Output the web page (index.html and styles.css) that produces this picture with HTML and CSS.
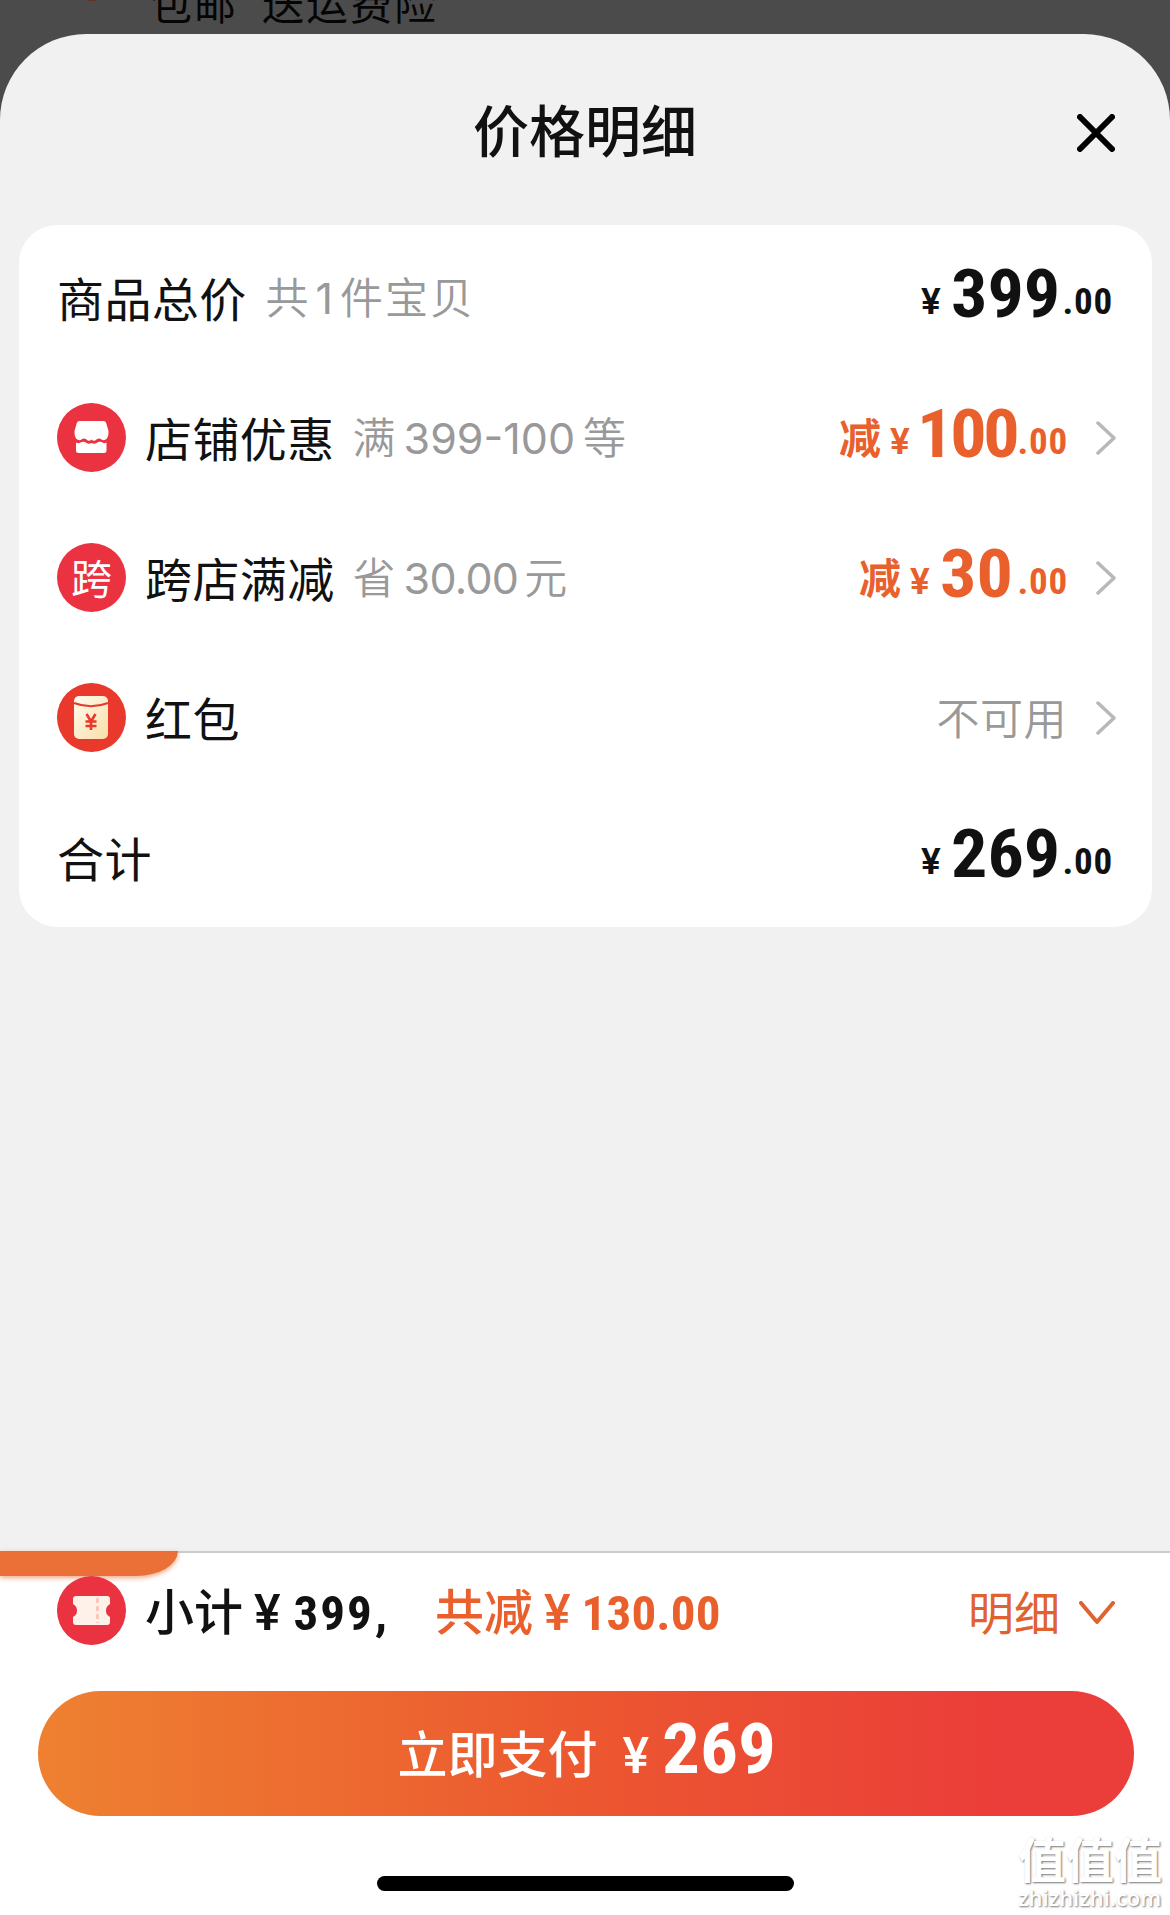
FILE: index.html
```html
<!DOCTYPE html>
<html lang="zh-CN">
<head>
    <meta charset="UTF-8">
    <meta name="viewport" content="width=device-width, initial-scale=1.0">
    <title>价格明细</title>
    <link rel="stylesheet" href="styles.css">
</head>
<body>
    <div class="page">
        <!-- 背景页面 -->
        <div class="backdrop">
            <span class="backdrop-dot"></span>
            <span class="backdrop-text">包邮</span>
            <span class="backdrop-text">送运费险</span>
        </div>

        <!-- 价格明细弹层 -->
        <div class="sheet">
            <div class="sheet-header">
                <h1 class="sheet-title">价格明细</h1>
                <svg class="close-icon" viewBox="0 0 38 38">
                    <path d="M3 3L35 35M35 3L3 35"/>
                </svg>
            </div>

            <div class="card">
                <div class="row">
                    <span class="label">商品总价</span>
                    <span class="sub count">共<span class="num">1</span>件宝贝</span>
                    <div class="price">
                        <span class="yen">¥</span><span class="big">399</span><span class="small">.00</span>
                    </div>
                </div>

                <div class="row">
                    <svg class="icon" viewBox="0 0 69 69">
                        <circle cx="34.5" cy="34.5" r="34.5" fill="#ea3241"/>
                        <path d="M22.500 18h24q2 0 2.700 2l2.300 8q.5 4-1.500 7.500-3 3-5.500 1-2.500-2-5 0-2.500 2.500-5 0-2.500 2.500-5 0-2.500-2-5 0-2.500 2-5.500-1-2-3.500-1.500-7.500l2.300-8q.7-2 2.700-2z" fill="#fff"/>
                        <path d="M19 39.500q3 1.500 5.500-.5 2.500-1 5 1 2.500 1.500 5 0 2.500 1.500 5 0 2.500-2 5-1 2.500 2 5 .5v8q0 2.500-2.500 2.500H21.500q-2.500 0-2.500-2.500z" fill="#fff"/>
                    </svg>
                    <span class="label">店铺优惠</span>
                    <span class="sub">满<span class="num">399-100</span>等</span>
                    <div class="price orange">
                        <span class="minus">减</span><span class="yen">¥</span><span class="big hundred">100</span><span class="small">.00</span>
                    </div>
                    <svg class="arrow" viewBox="0 0 20 34"><path d="M2 2L18 17L2 32"/></svg>
                </div>

                <div class="row">
                    <span class="icon icon-text">跨</span>
                    <span class="label">跨店满减</span>
                    <span class="sub">省<span class="num saved">30.00</span>元</span>
                    <div class="price orange">
                        <span class="minus">减</span><span class="yen">¥</span><span class="big">30</span><span class="small">.00</span>
                    </div>
                    <svg class="arrow" viewBox="0 0 20 34"><path d="M2 2L18 17L2 32"/></svg>
                </div>

                <div class="row">
                    <svg class="icon" viewBox="0 0 69 69">
                        <defs>
                            <linearGradient id="packet" x1="0" y1="0" x2="1" y2="1">
                                <stop offset="0" stop-color="#fffaf0"/>
                                <stop offset="1" stop-color="#f9dfa8"/>
                            </linearGradient>
                        </defs>
                        <circle cx="34.5" cy="34.5" r="34.5" fill="#e8392c"/>
                        <rect x="17" y="13" width="34" height="43" rx="5" fill="url(#packet)"/>
                        <path d="M17 20q17 6.500 34 0" fill="none" stroke="#e8392c" stroke-width="2"/>
                        <path d="M29.500 31l4.500 7.500L38.500 31M34 38.500V47M28.500 38.500h11M28.500 43h11" fill="none" stroke="#e8392c" stroke-width="2.600"/>
                    </svg>
                    <span class="label">红包</span>
                    <span class="unavailable">不可用</span>
                    <svg class="arrow" viewBox="0 0 20 34"><path d="M2 2L18 17L2 32"/></svg>
                </div>

                <div class="row">
                    <span class="label">合计</span>
                    <div class="price">
                        <span class="yen">¥</span><span class="big">269</span><span class="small">.00</span>
                    </div>
                </div>
            </div>
        </div>

        <!-- 底部支付栏 -->
        <div class="footer">
            <div class="tab"></div>
            <div class="summary">
                <svg class="icon" viewBox="0 0 69 69">
                    <circle cx="34.5" cy="34.5" r="34.5" fill="#ea3241"/>
                    <path d="M19 20h31q3 0 3 3v5q-4 2-4 6.500t4 6.500v5q0 3-3 3H19q-3 0-3-3v-5q4-2 4-6.500T16 28v-5q0-3 3-3z" fill="#fdf1ea"/>
                    <path d="M40.500 22v25" stroke="#f9c6c0" stroke-width="3" stroke-dasharray="5 3"/>
                </svg>
                <span class="total"><span class="zh">小计</span><span class="cur">¥</span><span class="din">399</span><span class="comma">,</span></span>
                <span class="total off"><span class="zh">共减</span><span class="cur">¥</span><span class="din">130.00</span></span>
                <span class="detail">明细</span>
                <svg class="down" viewBox="0 0 36 24"><path d="M2 2L18 21L34 2"/></svg>
            </div>
            <button class="pay-btn">
                <span class="pay-text">立即支付</span><span class="pay-yen">¥</span><span class="pay-num">269</span>
            </button>
            <div class="home-bar"></div>
        </div>

        <!-- 水印 -->
        <div class="watermark">
            <span class="mark-zh">值值值</span>
            <span class="mark-en">zhizhizhi.com</span>
        </div>
    </div>
</body>
</html>
```
FILE: styles.css
```css
* {
    box-sizing: border-box;
}

body {
    margin: 0;
    font-family: "Noto Sans CJK SC", sans-serif;
    color: #111;
}

.page {
    position: relative;
    display: flex;
    flex-direction: column;
    width: 1170px;
    height: 1915px;
    overflow: hidden;
    background: #4b4b4b;
}

.backdrop {
    display: flex;
    align-items: flex-end;
    height: 34px;
    padding: 0 0 12px 80px;
}

.backdrop-dot {
    width: 24px;
    height: 24px;
    margin: 0 46px 21px 0;
    border-radius: 50%;
    background: #6e2a20;
}

.backdrop-text {
    margin-right: 24px;
    font-size: 42px;
    letter-spacing: 2px;
    line-height: 40px;
    color: #050505;
}

.sheet {
    flex: 1;
    border-radius: 86px 86px 0 0;
    background: #f1f1f1;
}

.sheet-header {
    display: flex;
    align-items: center;
    height: 191px;
    padding: 0 55px 0 93px;
}

.sheet-title {
    flex: 1;
    margin: 0 0 3px;
    font-size: 56px;
    font-weight: 500;
    line-height: 84px;
    text-align: center;
}

.close-icon {
    width: 38px;
    height: 38px;
    margin-top: 6px;
    stroke: #000;
    stroke-width: 6;
    stroke-linecap: round;
}

.card {
    display: grid;
    grid-template-rows: repeat(5, 1fr);
    height: 702px;
    margin: 0 18px 0 19px;
    padding: 2px 36px 0 38px;
    border-radius: 38px;
    background: #fff;
}

.row {
    display: flex;
    align-items: center;
}

.icon {
    width: 69px;
    height: 69px;
    margin-right: 19px;
    flex-shrink: 0;
}

.icon-text {
    border-radius: 50%;
    background: #ea3241;
    color: #fff;
    font-size: 41px;
    line-height: 67px;
    text-align: center;
}

.label {
    margin-bottom: 1px;
    font-size: 47px;
    letter-spacing: 0.4px;
    line-height: 60px;
    white-space: nowrap;
}

.sub {
    margin: 0 0 1px 18px;
    font-size: 43px;
    font-weight: 350;
    line-height: 60px;
    color: #999;
    white-space: nowrap;
}

.count {
    margin-left: 19px;
    letter-spacing: 2px;
}

.num {
    margin: 0 8px;
    font-family: Inter, sans-serif;
    font-weight: 400;
}

.count .num {
    margin: 0 5px;
}

.saved {
    margin-right: 6px;
    letter-spacing: -0.7px;
}

.price {
    display: flex;
    align-items: baseline;
    margin: 0 0 1px auto;
    padding-right: 5px;
    font-family: Roboto, sans-serif;
    font-weight: 700;
    line-height: 60px;
}

.orange {
    padding-right: 1px;
    color: #e9602d;
}

.minus {
    margin-right: 9px;
    font-family: "Noto Sans CJK SC", sans-serif;
    font-size: 42px;
}

.yen {
    margin-right: 10px;
    font-size: 37px;
    font-weight: 600;
}

/* 大号数字比两侧小字略低 */
.big {
    margin-right: 9px;
    font-size: 67px;
    font-stretch: 87.5%;
    transform: translateY(3px) scaleX(1.075);
    transform-origin: left;
}

.hundred {
    margin: 0 7px 0 -3px;
    letter-spacing: -3px;
}

.small {
    margin: 0 -2px 0 1px;
    font-size: 37px;
    font-stretch: 87.5%;
    letter-spacing: 0.8px;
}

.arrow {
    width: 20px;
    height: 34px;
    margin: 2px 0 0 29px;
    fill: none;
    stroke: #b8b8b8;
    stroke-width: 3.500;
    stroke-linecap: round;
    stroke-linejoin: round;
}

.unavailable {
    margin: 0 0 2px auto;
    font-size: 43px;
    font-weight: 350;
    letter-spacing: 0.5px;
    color: #999;
}

.footer {
    height: 364px;
    border-top: 2px solid #ccc;
    background: #fff;
}

.tab {
    width: 178px;
    height: 25px;
    margin-top: -2px;
    border-radius: 0 0 42px 0 / 0 0 25px 0;
    background: #ea7037;
    box-shadow: 0 2px 5px rgba(234, 112, 55, 0.6);
}

.summary {
    position: relative;
    display: flex;
    align-items: center;
    height: 69px;
    padding: 0 55px 0 57px;
}

.total {
    display: flex;
    align-items: baseline;
    margin-top: 2px;
    font-weight: 500;
    line-height: 60px;
}

.off {
    margin-left: 46px;
    color: #e9602d;
}

.zh {
    font-size: 49px;
}

.cur {
    margin: 0 9px 0 11px;
    font-family: Roboto, sans-serif;
    font-size: 50px;
}

.din,
.comma {
    font-family: Roboto, sans-serif;
    font-size: 49px;
    font-weight: 700;
    font-stretch: 87.5%;
    letter-spacing: 2px;
}

.total .din {
    margin-left: 4px;
}

.comma {
    margin-left: 1px;
}

.off .din {
    margin-left: 2px;
    letter-spacing: 0.2px;
}

.detail {
    margin: 0 0 2px auto;
    font-size: 46px;
    color: #e0622f;
}

.down {
    width: 36px;
    height: 24px;
    margin: 4px 0 0 19px;
    fill: none;
    stroke: #e0622f;
    stroke-width: 4;
    stroke-linecap: round;
    stroke-linejoin: round;
}

.pay-btn {
    display: flex;
    justify-content: center;
    align-items: baseline;
    width: 1096px;
    height: 125px;
    margin: 46px 0 0 38px;
    padding: 0 0 4px;
    border: 0;
    border-radius: 63px;
    background: linear-gradient(90deg, #ee8130, #ec5730 50%, #eb3d3a 88%);
    color: #fff;
    line-height: 115px;
}

.pay-text {
    font-family: "Noto Sans CJK SC", sans-serif;
    font-size: 50px;
    font-weight: 500;
}

.pay-yen {
    margin: 0 13px 0 25px;
    font-family: Roboto, sans-serif;
    font-size: 50px;
    font-weight: 500;
}

.pay-num {
    margin-right: 5px;
    font-family: Roboto, sans-serif;
    font-size: 71px;
    font-weight: 700;
    font-stretch: 87.5%;
    transform: scaleX(1.06);
    transform-origin: left;
}

.home-bar {
    width: 417px;
    height: 15px;
    margin: 60px auto 0;
    border-radius: 8px;
    background: #000;
}

/* 水印浮在页面右下角 */
.watermark {
    position: absolute;
    right: 8px;
    bottom: 6px;
    display: flex;
    flex-direction: column;
    color: #fff;
    text-shadow: 1px 1px 2px #777;
}

.mark-zh {
    font-size: 48px;
    font-weight: 700;
    line-height: 56px;
}

.mark-en {
    font-family: "Open Sans", sans-serif;
    font-size: 22px;
    font-weight: 600;
    line-height: 24px;
}
```
